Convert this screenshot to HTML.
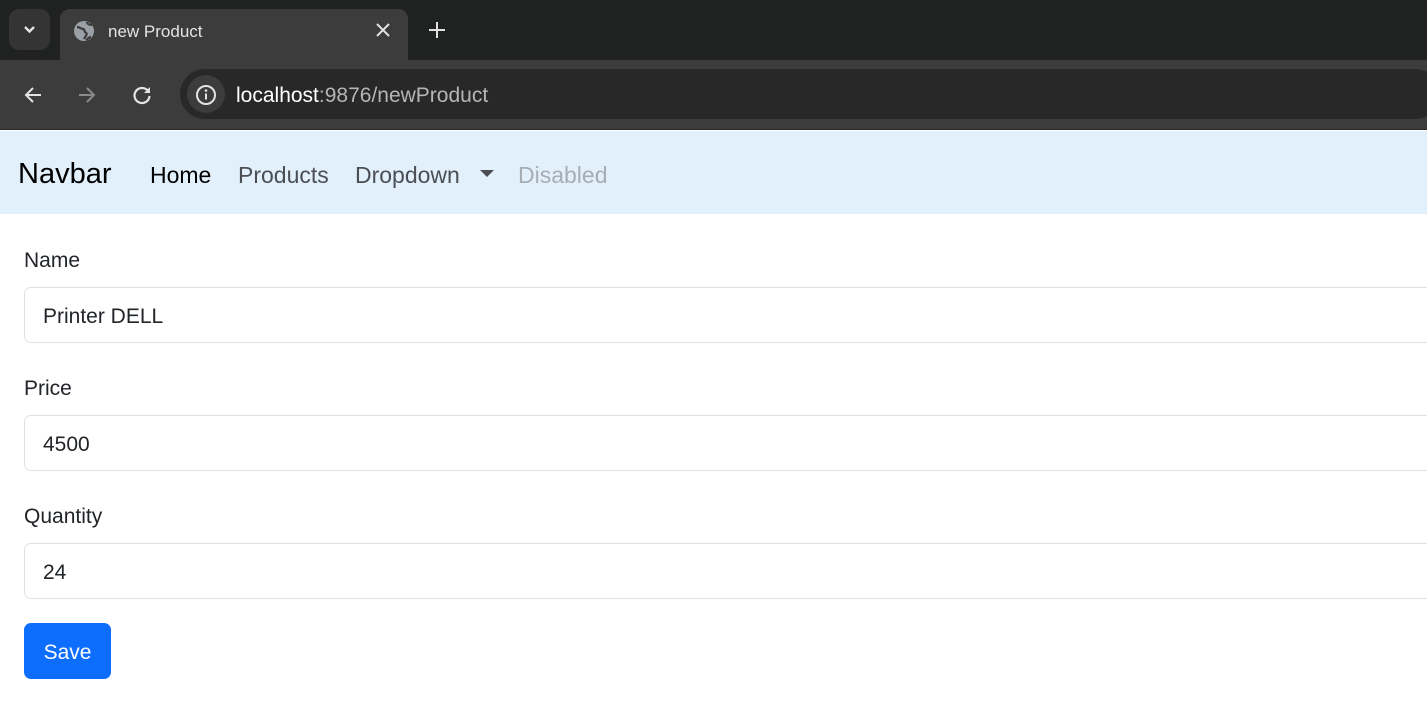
<!DOCTYPE html>
<html><head><meta charset="utf-8"><style>
*{margin:0;padding:0;box-sizing:border-box}
body{width:1427px;height:712px;overflow:hidden;background:#fff;font-family:"Liberation Sans",sans-serif;position:relative}
.abs{position:absolute}
.strip{left:0;top:0;width:1427px;height:60px;background:#202221}
.tb{left:0;top:60px;width:1427px;height:70px;background:#3c3c3c;border-bottom:1px solid #2a2a2a}
.tab{left:60px;top:9px;width:348px;height:52px;background:#3c3c3c;border-radius:10px 10px 0 0}
.dd{left:9px;top:9px;width:41px;height:41px;background:#343434;border-radius:10px}
.addr{left:180px;top:69px;width:1260px;height:50px;background:#282828;border-radius:25px}
.info{left:187px;top:75px;width:38px;height:38px;background:#3c3c3c;border-radius:50%}
.nav{left:0;top:131px;width:1427px;height:83px;background:#e2f0fc}
.nav span{position:absolute;top:31px;font-size:23px}
.lbl{left:24px;font-size:21px;color:#212529}
.inp{left:24px;width:1420px;height:56px;border:1px solid #dee2e6;border-radius:7px;font-size:21px;color:#212529;padding:17px 0 0 18px}
.btn{left:24px;top:623px;width:87px;height:56px;background:#0d6efd;border-radius:7px;color:#fff;font-size:21px;padding-top:18px;text-align:center}
</style></head><body>
<div class="abs strip"></div>
<div class="abs dd"><svg width="41" height="41"><path d="M16 18l4.5 4.5L25 18" stroke="#e3e3e3" stroke-width="2.4" fill="none"/></svg></div>
<div class="abs tab"></div>
<svg class="abs" style="left:73px;top:20px" width="22" height="22"><circle cx="11" cy="11" r="10" fill="#9aa0a6"/><path d="M4 7c3 0 4 2 6 2s1 3 3 4-1 4-2 6M14 2c0 2 3 3 5 3M13 20c2-1 3-3 5-3" stroke="#3c3c3c" stroke-width="2.2" fill="none"/></svg>
<div class="abs" style="left:108px;top:22px;font-size:17px;color:#e3e3e3">new Product</div>
<svg class="abs" style="left:376px;top:23px" width="14" height="14"><path d="M1 1l12 12M13 1L1 13" stroke="#e3e3e3" stroke-width="2"/></svg>
<svg class="abs" style="left:429px;top:22px" width="16" height="16"><path d="M8 0v16M0 8h16" stroke="#e3e3e3" stroke-width="2"/></svg>
<div class="abs tb"></div>
<svg class="abs" style="left:23px;top:85px" width="20" height="20"><path d="M18 10H3M10 3l-7 7 7 7" stroke="#e3e3e3" stroke-width="2" fill="none"/></svg>
<svg class="abs" style="left:77px;top:85px" width="20" height="20"><path d="M2 10h15M10 3l7 7-7 7" stroke="#8a8a8a" stroke-width="2" fill="none"/></svg>
<svg class="abs" style="left:131px;top:84px" width="22" height="22"><path d="M17 7A7.5 7.5 0 1 0 18.5 12" stroke="#e3e3e3" stroke-width="2.2" fill="none"/><path d="M19 3v6h-6z" fill="#e3e3e3"/></svg>
<div class="abs addr"></div>
<div class="abs info"></div>
<svg class="abs" style="left:195px;top:84px" width="22" height="22"><circle cx="11" cy="11" r="9" stroke="#e3e3e3" stroke-width="2" fill="none"/><path d="M11 9.5v6" stroke="#e3e3e3" stroke-width="2"/><circle cx="11" cy="6.5" r="1.3" fill="#e3e3e3"/></svg>
<div class="abs" style="left:236px;top:84px;font-size:21px;color:#fff">localhost<span style="color:#b5b5b5">:9876/newProduct</span></div>
<div class="abs nav">
<span style="left:18px;top:27px;font-size:29px;color:#000">Navbar</span>
<span style="left:150px;color:#000">Home</span>
<span style="left:238px;color:#4b4f53">Products</span>
<span style="left:355px;color:#4b4f53">Dropdown</span>
<svg style="position:absolute;left:480px;top:39px" width="14" height="8"><path d="M0 0h14L7 7z" fill="#4b4f53"/></svg>
<span style="left:518px;color:#a6aeb4">Disabled</span>
</div>
<div class="abs lbl" style="top:249px">Name</div>
<div class="abs inp" style="top:287px">Printer DELL</div>
<div class="abs lbl" style="top:377px">Price</div>
<div class="abs inp" style="top:415px">4500</div>
<div class="abs lbl" style="top:505px">Quantity</div>
<div class="abs inp" style="top:543px">24</div>
<div class="abs btn">Save</div>
</body></html>
